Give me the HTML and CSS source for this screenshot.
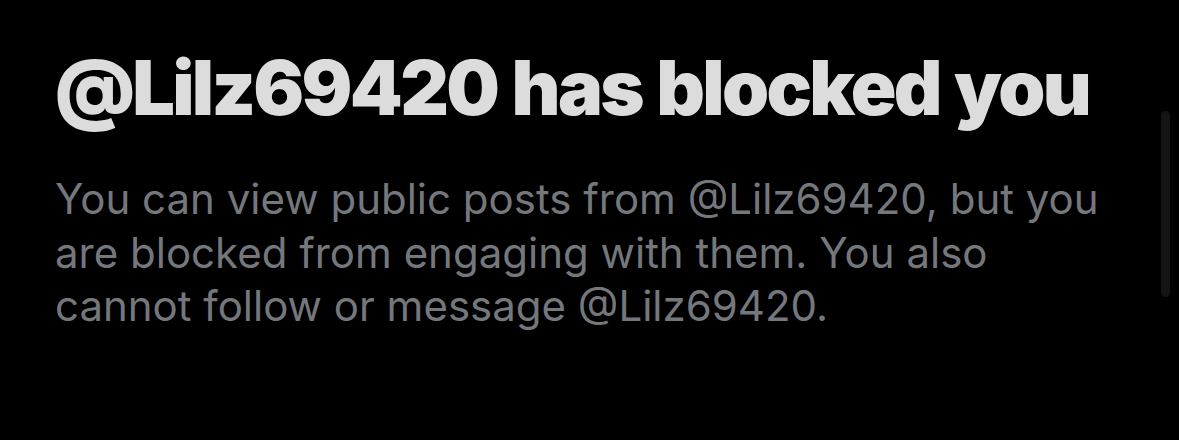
FILE: index.html
```html
<!DOCTYPE html>
<html>
<head>
<meta charset="utf-8">
<link rel="stylesheet" href="styles.css">
</head>
<body>
<div class="page">
  <main class="content">
    <h1 class="title">@Lilz69420 has blocked you</h1>
    <p class="desc">You can view public posts from @Lilz69420, but you are blocked from engaging with them. You also cannot follow or message @Lilz69420.</p>
  </main>
  <div class="scrolltrack"><div class="scrollthumb"></div></div>
</div>
</body>
</html>
```
FILE: styles.css
```css
html, body {
  margin: 0;
  padding: 0;
  background: #000;
  height: 100%;
  overflow: hidden;
}
.page {
  display: flex;
  width: 1179px;
  height: 440px;
}
.content {
  flex: 1;
  padding: 43px 0 0 55px;
}
.title {
  margin: 0;
  font-family: Inter, "Liberation Sans", sans-serif;
  font-weight: 900;
  font-size: 75.5px;
  line-height: 90px;
  letter-spacing: -2.7px;
  word-spacing: 2px;
  color: #dcdcdc;
}
.desc {
  margin: 39px 0 0 0;
  width: 1055px;
  font-family: Inter, "Liberation Sans", sans-serif;
  font-weight: 400;
  font-size: 42px;
  line-height: 53.5px;
  color: #74787d;
}
.scrolltrack {
  width: 9px;
  padding: 111px 9px 0 0;
}
.scrollthumb {
  height: 186px;
  border-radius: 5px;
  background: #141414;
}
```
